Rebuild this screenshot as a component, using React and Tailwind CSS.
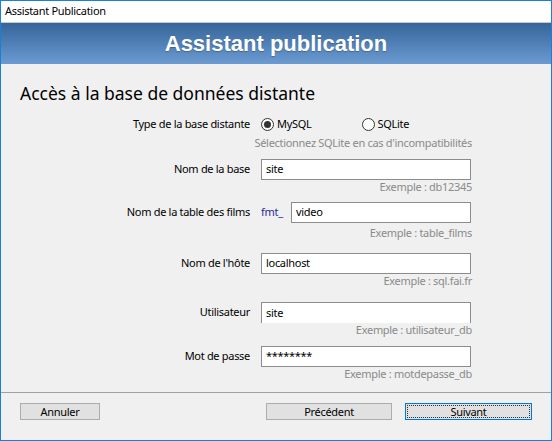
export default function App() {
  return (
    <div className="w-[552px] h-[441px] border border-[#1c7fd6] bg-[#f0f0f0] flex flex-col font-['Noto_Sans',sans-serif] text-[11px] tracking-[-0.3px] text-black overflow-hidden">
      {/* Title bar */}
      <div className="h-[22px] bg-white flex items-center pl-[4px] border-b border-[#c8c8c8]">
        Assistant Publication
      </div>

      {/* Banner */}
      <div className="h-[41px] bg-gradient-to-b from-[#36659b] to-[#6b9bd1] flex items-center justify-center">
        <span className="font-['Liberation_Sans',Arial,sans-serif] font-bold text-[22px] tracking-normal text-white [text-shadow:0_1px_1px_rgba(0,0,0,0.25)]">
          Assistant publication
        </span>
      </div>

      {/* Body */}
      <div className="flex flex-col pt-[17px]">
        <h1 className="pl-[19px] text-[17.5px] leading-[24px] tracking-normal">Accès à la base de données distante</h1>

        {/* Type */}
        <div className="mt-[9px] flex items-center h-[21px]">
          <div className="w-[249px] text-right">Type de la base distante</div>
          <div className="ml-[11px] flex items-center">
            <Radio checked />
            <span className="ml-[3px]">MySQL</span>
            <div className="ml-[51px] flex items-center">
              <Radio />
              <span className="ml-[2px]">SQLite</span>
            </div>
          </div>
        </div>
        <Hint className="mt-[1px]">Sélectionnez SQLite en cas d'incompatibilités</Hint>

        <Field className="mt-[9px]" label="Nom de la base" value="site" hint="Exemple : db12345" />

        <div className="mt-[8px] flex items-center h-[21px]">
          <div className="w-[249px] text-right">Nom de la table des films</div>
          <div className="ml-[11px] w-[210px] flex items-center">
            <span className="text-[#2c1fa0] w-[30px]">fmt_</span>
            <Input value="video" />
          </div>
        </div>
        <Hint className="mt-[3px]">Exemple : table_films</Hint>

        <Field className="mt-[13px]" label="Nom de l'hôte" value="localhost" hint="Exemple : sql.fai.fr" />
        <Field className="mt-[14px]" label="Utilisateur" value="site" hint="Exemple : utilisateur_db" open />
        <Field className="mt-[9px]" label="Mot de passe" value="********" hint="Exemple : motdepasse_db" />

        {/* Separator */}
        <div className="mt-[11px] border-t border-[#a0a0a0]" />

        {/* Buttons */}
        <div className="mt-[10px] flex items-center h-[17px]">
          <button className="ml-[19px] w-[80px] h-[17px] bg-[#e1e1e1] border border-[#adadad] leading-none">
            Annuler
          </button>
          <button className="ml-auto w-[126px] h-[17px] bg-[#e1e1e1] border border-[#adadad] leading-none">
            Précédent
          </button>
          <button className="ml-[13px] mr-[19px] w-[127px] h-[17px] bg-[#e1e1e1] border border-[#0078d7] p-[1px]">
            <div className="w-full h-full border border-dotted border-[#333] flex items-center justify-center leading-none">
              Suivant
            </div>
          </button>
        </div>
      </div>
    </div>
  )
}

function Radio({ checked }) {
  return (
    <span className="w-[13px] h-[13px] rounded-full border border-[#333] bg-white flex items-center justify-center">
      {checked && <span className="w-[7px] h-[7px] rounded-full bg-[#333]" />}
    </span>
  )
}

function Input({ value, open }) {
  return (
    <div
      className={`flex-1 h-[21px] bg-white border border-[#8c8c8c] flex items-center pl-[4px] ${
        open ? 'border-b-0' : ''
      }`}
    >
      {value}
    </div>
  )
}

function Hint({ children, className = '' }) {
  return (
    <div className={`w-[471px] text-right text-[#8a8a8a] leading-[14px] ${className}`}>
      {children}
    </div>
  )
}

function Field({ label, value, hint, className = '', open }) {
  return (
    <>
      <div className={`flex items-center h-[21px] ${className}`}>
        <div className="w-[249px] text-right">{label}</div>
        <div className="ml-[11px] w-[210px] flex">
          <Input value={value} open={open} />
        </div>
      </div>
      <Hint>{hint}</Hint>
    </>
  )
}
